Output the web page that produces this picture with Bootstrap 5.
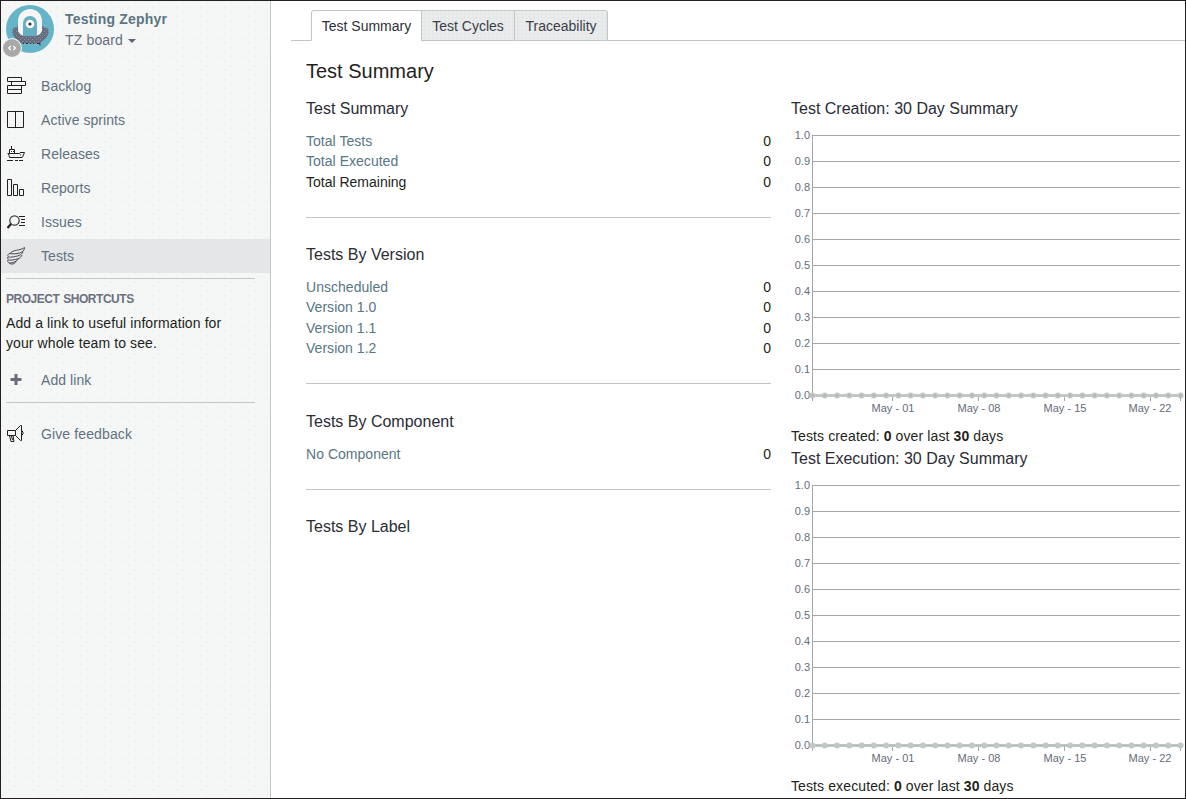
<!DOCTYPE html>
<html lang="en">
<head>
<meta charset="utf-8">
<meta name="viewport" content="width=device-width, initial-scale=1">
<title>Test Summary - Testing Zephyr</title>
<link href="https://cdn.jsdelivr.net/npm/bootstrap@5.3.0/dist/css/bootstrap.min.css" rel="stylesheet">
<style>
body{font-family:"Liberation Sans",Arial,sans-serif;font-size:14px;line-height:20px;color:#231f20;background:#fff}
a{text-decoration:none}
.app-frame{height:799px;border:1px solid #231f20;overflow:hidden}
.side-panel{width:270px;flex:none;background-color:#f5f7f6;background-image:radial-gradient(circle at 2px 2px,#edf0ef .6px,transparent 1px),radial-gradient(circle at 8px 6px,#edf0ef .6px,transparent 1px);background-size:12px 9px;border-right:1px solid #c1c7c5}
.project-head{height:68px;padding:4px 0 0 1px}
.avatar{width:54px;height:54px;flex:none}
.project-text{padding-left:9px}
.project-title{color:#5b7580;font-weight:700;letter-spacing:.2px;line-height:20px;padding-top:4px}
.board-name{color:#686d7e;line-height:22px;letter-spacing:.15px}
.board-name::after{content:"";display:inline-block;border:4px solid transparent;border-top-color:#5f6475;border-bottom:0;margin-left:5px;vertical-align:2px}
.side-link{height:34px;padding-left:5px;color:#627180;letter-spacing:.06px}
.side-link svg{width:20px;height:20px;margin-right:15px;flex:none}
.side-link.current{background:#e5e6e8}
.side-rule{height:1px;background:#c1c7c5;margin:5px 15px 0 5px}
.side-label{font-size:12px;font-weight:700;color:#6d7080;line-height:16px;padding:12px 0 0 5px;letter-spacing:-.47px;word-spacing:1px}
.shortcut-note{padding:6px 0 0 5px;letter-spacing:.1px}
.add-link{margin-top:10px}
.give-link{margin-top:14px;letter-spacing:.12px}
.view-tabs{margin-left:20px;padding:9px 0 0 20px;height:40px;border-bottom:1px solid #c1c7c5}
.view-tabs .nav-link{width:94px;height:31px;padding:5px 0;color:#3b3e48;background:#e6e8e9 radial-gradient(circle at 1px 1px,#eff1f1 .6px,transparent 1px) 0 0/4px 4px;border:1px solid #c1c7c5;border-radius:0;margin:0 0 0 -1px;text-align:center;white-space:nowrap}
.view-tabs .nav-link.active{width:111px;background:#fff;color:#2e3038;border-color:#c1c7c5 #c1c7c5 #fff;border-top-left-radius:3px;margin-left:0}
.view-tabs .nav-item:last-child .nav-link{border-top-right-radius:3px}
.page-body{padding:18px 0 0 35px}
.page-title{font-size:20px;line-height:24px;font-weight:400;margin:0 0 13.7px}
.block-title{font-size:16px;line-height:24px;font-weight:400;margin:0;color:#2b2c34}
.stat-col{width:465px;flex:none}
.chart-col{width:394px;flex:none;margin-left:20px}
.stat-block{border-bottom:1px solid #c3c6c6;padding-bottom:24.5px;margin-bottom:25.2px}
.stat-block:last-child{border:0}
.stat-rows{padding-top:10px;line-height:20.5px}
.stat-rows a{color:#587684;letter-spacing:.03px}
.chart{display:block;width:394px;height:306px;margin-top:-.7px}
.chart text{font-size:11px;fill:#666b7b}
.chart-note{line-height:20px;height:20px;letter-spacing:.11px}
.chart-group{height:350px}
</style>
</head>
<body>
<div class="app-frame d-flex">
  <aside class="side-panel">
    <div class="project-head d-flex">
      <svg class="avatar" viewBox="0 0 54 54">
        <defs><pattern id="knit" width="4" height="4" patternUnits="userSpaceOnUse"><rect width="4" height="4" fill="#6b6b7d"/><path d="M0 0h1v1H0zM2 2h1v1H2z" fill="#67a9bb"/></pattern></defs>
        <circle cx="28" cy="24" r="24" fill="#66b4c7"/>
        <path d="M16 21L11 23.500Q9 27 13 33L19 38.500H38L44 33Q48 27 46 23.500L40 21z" fill="url(#knit)"/>
        <path d="M16 26V16a12 12 0 0 1 24 0v10q-2 4-5 4.500H21q-3-.5-5-4.500z" fill="#f5f5f7"/>
        <path d="M21 31V18a7 7 0 0 1 14 0v13z" fill="#66aec1"/>
        <circle cx="28" cy="19" r="4.300" fill="#fff"/><circle cx="28" cy="19" r="1.600" fill="#302d36"/>
        <path d="M21 38.500h1m2 0h2m2 0h1m2 0h1m3 0h3v2" fill="none" stroke="#302d36"/>
        <circle cx="10" cy="43" r="10" fill="#f5f7f6"/><circle cx="10" cy="43" r="9" fill="#a9a9a9"/>
        <path d="M8.800 41L6.800 43l2 2m2.600-4l2 2-2 2" fill="none" stroke="#fff" stroke-width="1.200"/>
      </svg>
      <div class="project-text">
        <div class="project-title">Testing Zephyr</div>
        <div class="board-name">TZ board</div>
      </div>
    </div>
    <nav class="d-flex flex-column">
      <a class="side-link d-flex align-items-center" href="#"><svg viewBox="0 0 20 20" fill="none" stroke="#231f20"><path d="M1.500 1.500h14v4h-14zM5.500 5.500h14v4h-14zM1.500 9.500h14v4h-14zM1.500 13.500h14v4h-14z"/></svg>Backlog</a>
      <a class="side-link d-flex align-items-center" href="#"><svg viewBox="0 0 20 20" fill="none" stroke="#231f20"><path d="M1.500 1.500h16v16h-16zM9.500 1.500v16"/></svg>Active sprints</a>
      <a class="side-link d-flex align-items-center" href="#"><svg viewBox="0 0 20 20" fill="none" stroke="#231f20"><path d="M5.500 2v3M3.500 9V5.500h5V9M1.500 9.500h12q0-1 1.500-1h3.500l-2 4.500M2.500 9.500l1 4h13M1 16.500h6m2 0h3m1 0h4"/><path d="M5 7.500h1m1 0h1M14 11h1"/></svg>Releases</a>
      <a class="side-link d-flex align-items-center" href="#"><svg viewBox="0 0 20 20" fill="none" stroke="#231f20"><path d="M1.500 1.500h4v16h-4zM7.500 6.500h4v11h-4zM13.500 11.500h4v6h-4z"/></svg>Reports</a>
      <a class="side-link d-flex align-items-center" href="#"><svg viewBox="0 0 20 20" fill="none" stroke="#3a3842"><circle cx="8.500" cy="8.500" r="4.700" stroke-width="1.200"/><path d="M5 12l-3.500 4" stroke-width="2.200" stroke="#231f20"/><path d="M13 4.500h6M15 7.500h4M15 10.500h4M13 13.500h6" stroke="#231f20"/></svg>Issues</a>
      <a class="side-link current d-flex align-items-center" href="#"><svg viewBox="0 0 20 20" fill="none" stroke="#4b4953"><path d="M18.500 1.500C14 5 7 3 3.500 8M18.500 1.500c0 3-2 4.500-5 5.500S6 8 3 7.500C.5 10.500 2 11.500 6 11c5-.5 10-2 11-5M2 11c-1 3 1 3.500 4 3 5-.5 9-2 10-5M2 14c-1 2 .5 3 3 3 4-.5 7-3 8-5M3 17c2 2 6 1 7-1.500"/></svg>Tests</a>
    </nav>
    <div class="side-rule"></div>
    <div class="side-label">PROJECT SHORTCUTS</div>
    <p class="shortcut-note mb-0">Add a link to useful information for<br>your whole team to see.</p>
    <a class="side-link add-link d-flex align-items-center" href="#"><svg viewBox="0 0 20 20"><path d="M10 4v11M4.500 9.500h11" stroke="#696b7b" stroke-width="3"/></svg>Add link</a>
    <div class="side-rule"></div>
    <a class="side-link give-link d-flex align-items-center" href="#"><svg viewBox="0 0 20 20" fill="none" stroke="#231f20"><path d="M1.500 6.500h8v5h-8zM9.500 6.500l5-5h1v15h-1l-5-5M16 6.500q2.500 2.500 0 5M3.500 11.500l1.500 6h3l-1-6M5.500 12l1 4"/></svg>Give feedback</a>
  </aside>
  <main class="flex-grow-1">
    <ul class="view-tabs nav flex-nowrap">
      <li class="nav-item"><a class="nav-link active" href="#">Test Summary</a></li>
      <li class="nav-item"><a class="nav-link" href="#">Test Cycles</a></li>
      <li class="nav-item"><a class="nav-link" href="#">Traceability</a></li>
    </ul>
    <div class="page-body">
      <h1 class="page-title">Test Summary</h1>
      <div class="d-flex">
        <div class="stat-col">
          <section class="stat-block">
            <h2 class="block-title">Test Summary</h2>
            <div class="stat-rows">
              <div class="d-flex justify-content-between"><a href="#">Total Tests</a><span>0</span></div>
              <div class="d-flex justify-content-between"><a href="#">Total Executed</a><span>0</span></div>
              <div class="d-flex justify-content-between"><span>Total Remaining</span><span>0</span></div>
            </div>
          </section>
          <section class="stat-block">
            <h2 class="block-title">Tests By Version</h2>
            <div class="stat-rows">
              <div class="d-flex justify-content-between"><a href="#">Unscheduled</a><span>0</span></div>
              <div class="d-flex justify-content-between"><a href="#">Version 1.0</a><span>0</span></div>
              <div class="d-flex justify-content-between"><a href="#">Version 1.1</a><span>0</span></div>
              <div class="d-flex justify-content-between"><a href="#">Version 1.2</a><span>0</span></div>
            </div>
          </section>
          <section class="stat-block">
            <h2 class="block-title">Tests By Component</h2>
            <div class="stat-rows">
              <div class="d-flex justify-content-between"><a href="#">No Component</a><span>0</span></div>
            </div>
          </section>
          <section class="stat-block">
            <h2 class="block-title">Tests By Label</h2>
          </section>
        </div>
        <div class="chart-col">
          <section class="chart-group">
            <h2 class="block-title">Test Creation: 30 Day Summary</h2>
            <svg class="chart" data-series="created"></svg>
            <div class="chart-note">Tests created: <b>0</b> over last <b>30</b> days</div>
          </section>
          <section class="chart-group">
            <h2 class="block-title">Test Execution: 30 Day Summary</h2>
            <svg class="chart" data-series="executed"></svg>
            <div class="chart-note">Tests executed: <b>0</b> over last <b>30</b> days</div>
          </section>
        </div>
      </div>
    </div>
  </main>
</div>
<script src="https://cdn.jsdelivr.net/npm/bootstrap@5.3.0/dist/js/bootstrap.bundle.min.js"></script>
<script>
document.querySelectorAll('.chart').forEach(function (svg) {
  var s = '', i, y, x;
  for (i = 0; i <= 10; i++) {
    y = 15.5 + 26 * i;
    s += '<text x="19" y="' + (y + 3.5) + '" text-anchor="end">' + (1 - i / 10).toFixed(1) + '</text>';
    s += '<path d="M21 ' + y + 'H389" stroke="#a6a6a8"/>';
  }
  s += '<path d="M21.500 15V281M389.500 275V281" stroke="#a6a6a8"/>';
  [['May - 01', 101.5], ['May - 08', 187.5], ['May - 15', 273.5], ['May - 22', 359.5]].forEach(function (t, n) {
    s += '<path d="M' + t[1] + ' 275V281" stroke="#a6a6a8"/><text x="' + (t[1] + (n === 3 ? -0.5 : 0.5)) + '" y="292" text-anchor="middle">' + t[0] + '</text>';
  });
  s += '<path d="M21 275.500H389" stroke="#c1c7c5" stroke-width="3"/>';
  var executed = svg.dataset.series === 'executed';
  if (executed) s += '<path d="M21 275.500H389" stroke="#a9adac" stroke-dasharray="1 1"/>';
  for (i = 0; i <= 30; i++) {
    x = 21.5 + i * 368 / 30;
    s += '<circle cx="' + x + '" cy="275.500" r="3" fill="#c1c7c5"/>';
    if (!executed) s += '<circle cx="' + x + '" cy="275.500" r="1.200" fill="#aeb2b1"/>';
  }
  svg.innerHTML = s;
});
</script>
</body>
</html>
